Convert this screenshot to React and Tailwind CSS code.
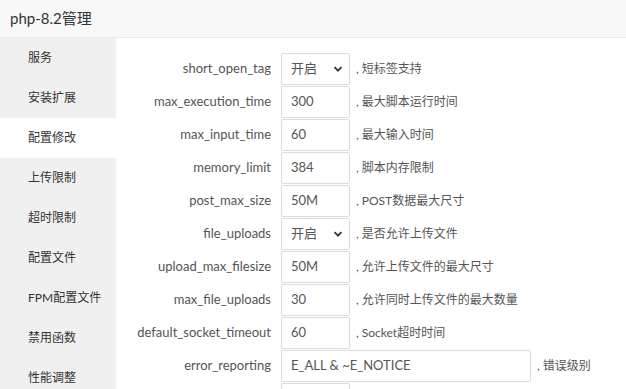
import React from "react";

const menu = ["服务", "安装扩展", "配置修改", "上传限制", "超时限制", "配置文件", "FPM配置文件", "禁用函数", "性能调整"];

const rows = [
  { name: "short_open_tag", value: "开启", select: true, desc: "短标签支持" },
  { name: "max_execution_time", value: "300", desc: "最大脚本运行时间" },
  { name: "max_input_time", value: "60", desc: "最大输入时间" },
  { name: "memory_limit", value: "384", desc: "脚本内存限制" },
  { name: "post_max_size", value: "50M", desc: "POST数据最大尺寸" },
  { name: "file_uploads", value: "开启", select: true, desc: "是否允许上传文件" },
  { name: "upload_max_filesize", value: "50M", desc: "允许上传文件的最大尺寸" },
  { name: "max_file_uploads", value: "30", desc: "允许同时上传文件的最大数量" },
  { name: "default_socket_timeout", value: "60", desc: "Socket超时时间" },
  { name: "error_reporting", value: "E_ALL & ~E_NOTICE", wide: true, desc: "错误级别" },
];

function Chevron() {
  return (
    <svg width="10" height="10" viewBox="0 0 10 10" className="text-[#333]">
      <path d="M1.5 3.2 L5 6.7 L8.5 3.2" fill="none" stroke="currentColor" strokeWidth="1.8" />
    </svg>
  );
}

export default function App() {
  return (
    <div
      className="w-[626px] h-[389px] overflow-hidden bg-white text-[#555]"
      style={{ fontFamily: 'Lato, "Noto Sans CJK SC", sans-serif' }}
    >
      <div className="h-[38px] bg-[#f8f8f8] border-b border-[#eaeaea] flex items-center pl-[10px] text-[15px] text-[#333]">
        php-8.2管理
      </div>
      <div className="flex">
        <div className="w-[116px] shrink-0 bg-[#f0f0f0] h-[351px]">
          {menu.map((m) => (
            <div
              key={m}
              className={
                "h-[40px] flex items-center pl-[28px] text-[12px] text-[#333] " +
                (m === "配置修改" ? "bg-white" : "")
              }
            >
              {m}
            </div>
          ))}
        </div>
        <div className="flex-1 pt-[15px] flex flex-col gap-[1px]">
          {rows.map((r) => (
            <div key={r.name} className="flex items-center h-[32px] text-[13px]">
              <div className="w-[165px] text-right pr-[10px] text-[#555]">{r.name}</div>
              <div
                className={
                  "h-[32px] border border-[#dcdcdc] rounded-[2px] flex items-center px-[9px] text-[#555] " +
                  (r.wide ? "w-[250px]" : "w-[69px]") +
                  (r.select ? " justify-between pr-[6px]" : "")
                }
              >
                <span>{r.value}</span>
                {r.select && <Chevron />}
              </div>
              <div className="ml-[6px] text-[12px] text-[#555]">, {r.desc}</div>
            </div>
          ))}
          <div className="flex h-[32px]">
            <div className="w-[165px]" />
            <div className="w-[69px] h-[32px] border border-[#dcdcdc] rounded-[2px]" />
          </div>
        </div>
      </div>
    </div>
  );
}
